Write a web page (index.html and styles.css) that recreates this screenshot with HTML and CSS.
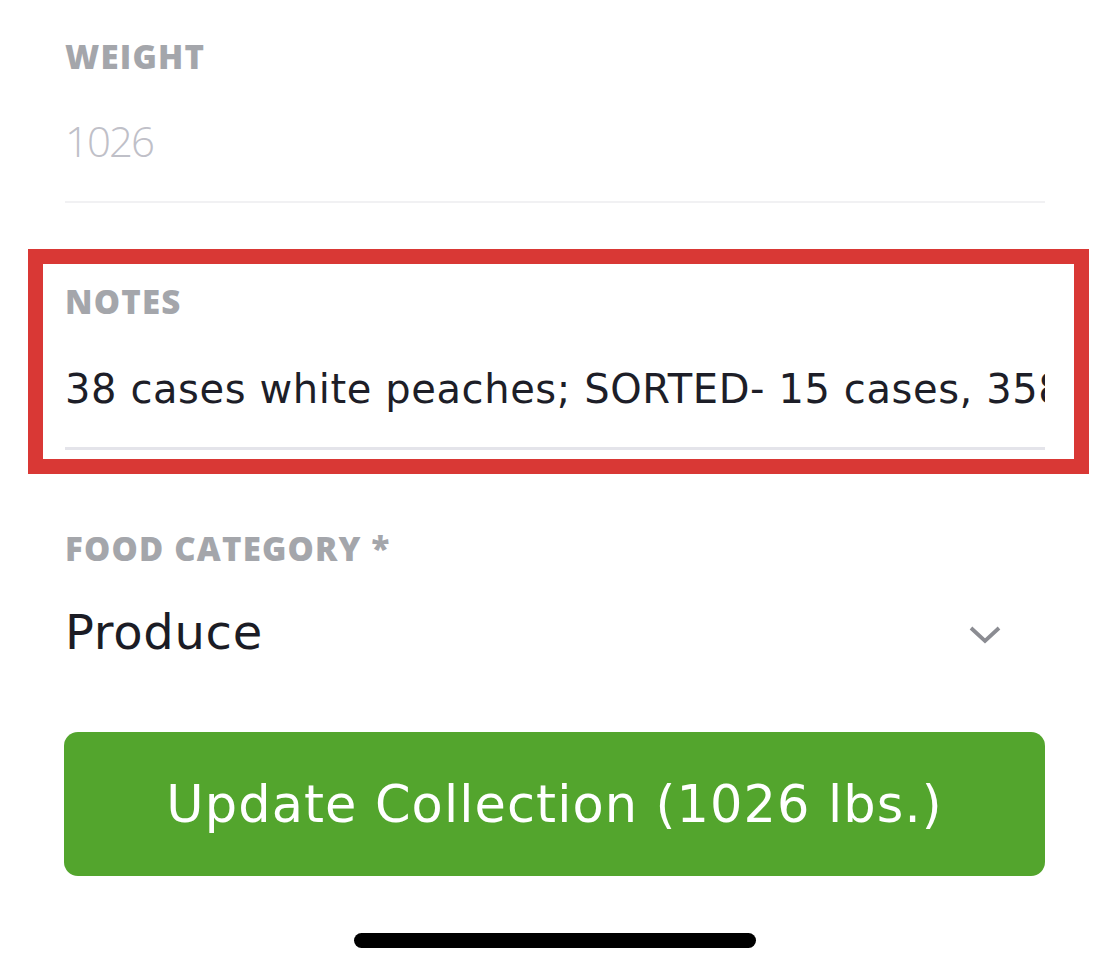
FILE: index.html
```html
<!DOCTYPE html>
<html lang="en">
<head>
<meta charset="utf-8">
<title>Update Collection</title>
<link rel="stylesheet" href="styles.css">
</head>
<body>
<main class="form">
  <section class="field field-weight">
    <div class="label">WEIGHT</div>
    <div class="value value-muted">1026</div>
    <div class="rule rule-light"></div>
  </section>

  <section class="highlight">
    <div class="label">NOTES</div>
    <div class="value value-notes">38 cases white peaches; SORTED- 15 cases, 358 lbs good; 23 cases, 668 lbs compost</div>
    <div class="rule rule-mid"></div>
  </section>

  <section class="field field-category">
    <div class="label">FOOD CATEGORY *</div>
    <div class="select-row">
      <span class="select-value">Produce</span>
      <svg class="chevron" width="32" height="18" viewBox="0 0 32 18" aria-hidden="true">
        <path d="M2 2 L16 15 L30 2" fill="none" stroke="#8b8c92" stroke-width="3.8" stroke-linecap="butt" stroke-linejoin="miter"/>
      </svg>
    </div>
  </section>

  <button class="submit" type="button">Update Collection (1026 lbs.)</button>
</main>
<div class="home-bar"></div>
</body>
</html>
```
FILE: styles.css
```css
html, body {
  margin: 0;
  padding: 0;
  background: #ffffff;
}

body {
  font-family: "DejaVu Sans", "Open Sans", sans-serif;
  width: 1109px;
  height: 964px;
  overflow: hidden;
}

.form {
  padding: 37px 64px 0 65px;
  display: flex;
  flex-direction: column;
}

.label {
  height: 40px;
  line-height: 40px;
  font-family: "Open Sans", sans-serif;
  font-size: 33px;
  font-weight: 800;
  color: #a4a6ab;
  letter-spacing: 1.2px;
  white-space: nowrap;
}

.value {
  height: 56px;
  line-height: 56px;
  white-space: nowrap;
}

.value-muted {
  margin-top: 36px;
  margin-bottom: -3px;
  font-family: "Open Sans", sans-serif;
  font-size: 42px;
  font-weight: 300;
  letter-spacing: -2px;
  color: #bfc0c8;
}

.rule {
  width: 100%;
}

.rule-light {
  margin-top: 35px;
  height: 2px;
  background: #f1f1f3;
}

.highlight {
  margin: 46px -44px 0 -37px;
  border: 15px solid #d93835;
  padding: 18px 29px 9px 22px;
  display: flex;
  flex-direction: column;
}

.value-notes {
  margin-top: 39px;
  margin-bottom: -4px;
  overflow: hidden;
  color: #1d1e28;
  font-size: 40px;
  letter-spacing: 0.6px;
}

.rule-mid {
  margin-top: 34px;
  height: 3px;
  background: #e4e4ea;
}

.field-category {
  margin-top: 55px;
}

.select-row {
  margin-top: 35px;
  height: 56px;
  display: flex;
  align-items: center;
  justify-content: space-between;
}

.select-value {
  font-size: 48px;
  line-height: 56px;
  letter-spacing: 0.7px;
  color: #1b1c25;
}

.chevron {
  margin-right: 44px;
  margin-top: 6px;
}

.submit {
  margin-top: 72px;
  margin-left: -1px;
  height: 144px;
  border: 0;
  border-radius: 14px;
  background: #53a52d;
  color: #ffffff;
  font-family: "DejaVu Sans", "Open Sans", sans-serif;
  font-size: 51px;
  letter-spacing: 1.1px;
  padding: 0;
  cursor: pointer;
}

.home-bar {
  width: 402px;
  height: 15px;
  border-radius: 8px;
  background: #000000;
  margin: 57px auto 0;
}
```
